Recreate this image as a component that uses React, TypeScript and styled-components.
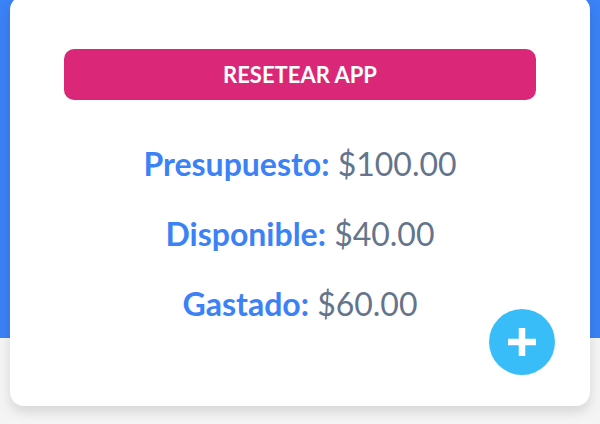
import styled, { createGlobalStyle } from 'styled-components';

const GlobalStyle = createGlobalStyle`
  * {
    box-sizing: border-box;
  }
  body {
    margin: 0;
    background: #f4f4f5;
    font-family: Lato, "Liberation Sans", sans-serif;
    overflow: hidden;
  }
`;

const stats = [
    { label: 'Presupuesto:', value: 100 },
    { label: 'Disponible:', value: 40 },
    { label: 'Gastado:', value: 60 },
];

const formatMoney = (amount: number) => `$${amount.toFixed(2)}`;

const App = () => {
    return (
        <>
            <GlobalStyle/>
            <Page>
                <Hero/>
                <Card>
                    <ResetButton type="button">Resetear App</ResetButton>
                    <StatList>
                        {stats.map((stat) => (
                            <Stat key={stat.label}>
                                <StatLabel>{stat.label}</StatLabel> {formatMoney(stat.value)}
                            </Stat>
                        ))}
                    </StatList>
                    <AddButton type="button" aria-label="Nuevo gasto">
                        <svg width="34" height="34" viewBox="0 0 34 34">
                            <path d="M17 3v28M3 17h28" stroke="#fff" strokeWidth="6.5"/>
                        </svg>
                    </AddButton>
                </Card>
            </Page>
        </>
    );
};

const Page = styled.div`
  min-height: 424px;
`;

const Hero = styled.header`
  height: 338px;
  background: #3b82f6;
`;

const Card = styled.main`
  position: relative;
  width: 580px;
  margin: -342px auto 0;
  padding: 53px 54px 83px;
  background: #fff;
  border-radius: 14px;
  box-shadow: 0 6px 12px rgba(0, 0, 0, 0.12);
`;

const ResetButton = styled.button`
  display: block;
  width: 100%;
  height: 51px;
  border: none;
  border-radius: 10px;
  background: #db2777;
  color: #fff;
  font-family: Lato, "Liberation Sans", sans-serif;
  font-size: 22px;
  font-weight: 700;
  text-transform: uppercase;
  cursor: pointer;
`;

const StatList = styled.div`
  display: flex;
  flex-direction: column;
  gap: 32px;
  margin-top: 45px;
`;

const Stat = styled.p`
  margin: 0;
  text-align: center;
  font-size: 32px;
  line-height: 38px;
  color: #64748b;
`;

const StatLabel = styled.span`
  color: #3b82f6;
  font-weight: 700;
`;

const AddButton = styled.button`
  position: absolute;
  right: 35px;
  bottom: 31px;
  width: 66px;
  height: 66px;
  display: flex;
  align-items: center;
  justify-content: center;
  padding: 0;
  border: none;
  border-radius: 50%;
  background: #38bdf8;
  cursor: pointer;
`;

export default App;
